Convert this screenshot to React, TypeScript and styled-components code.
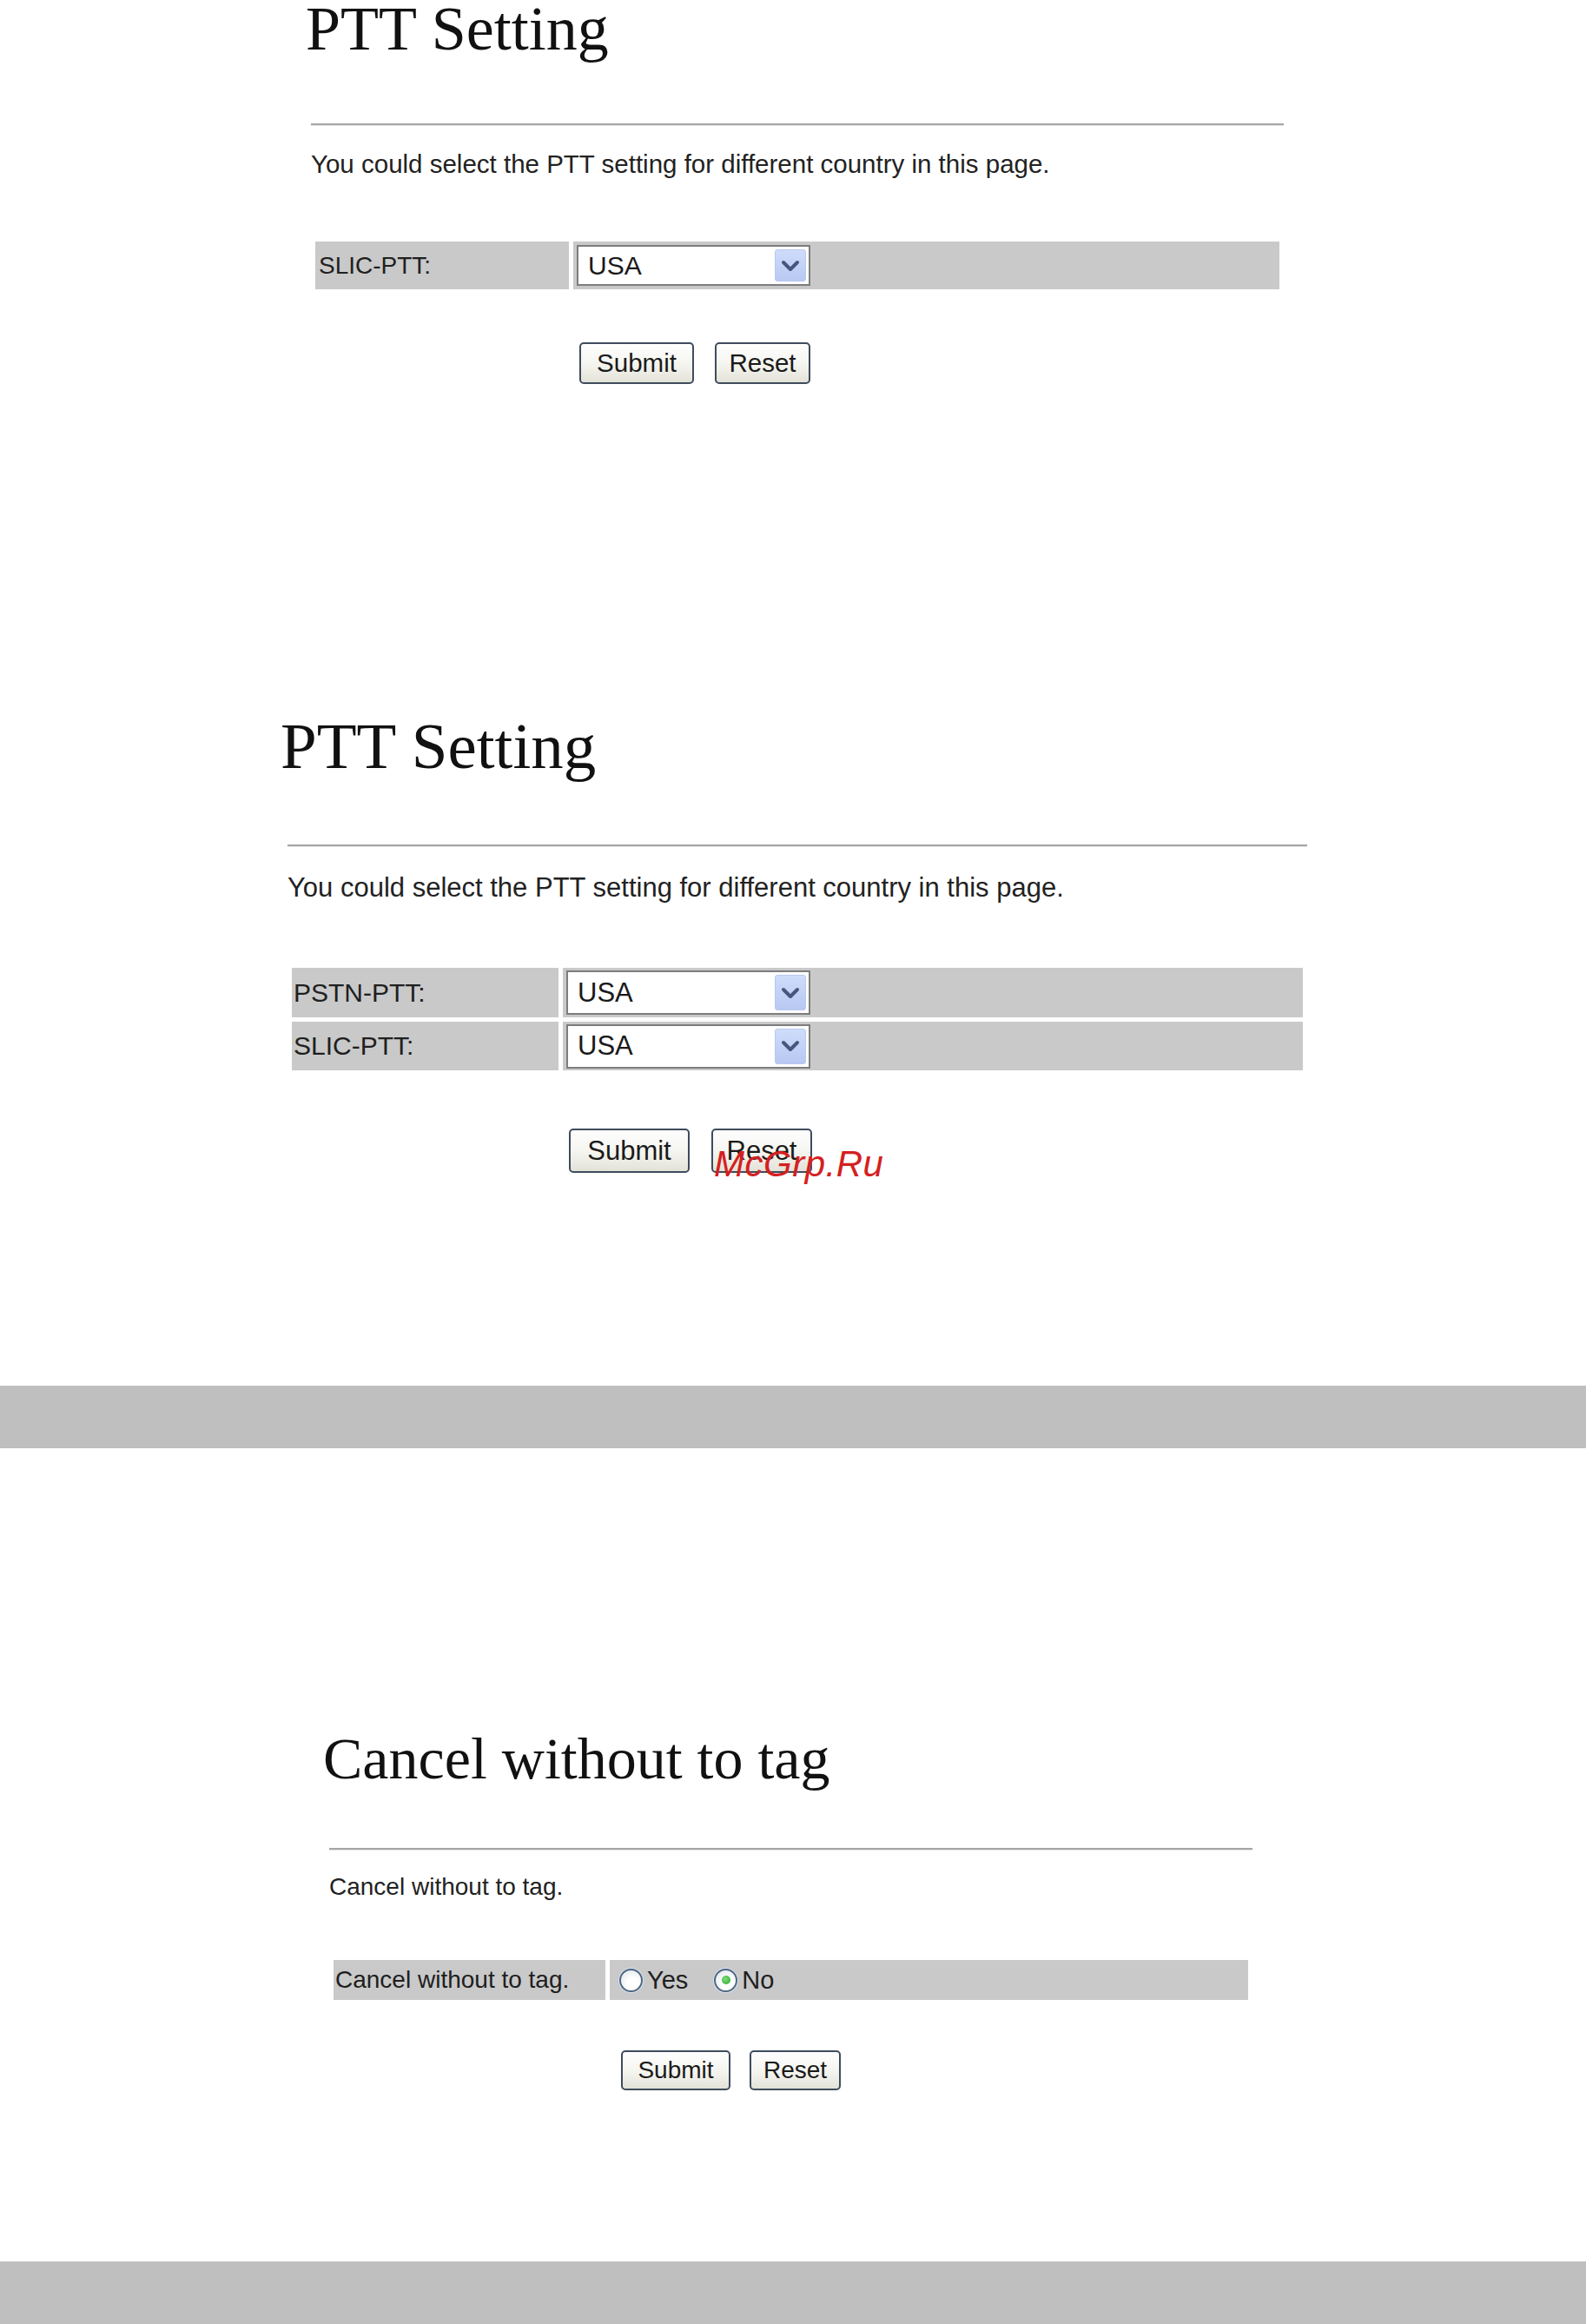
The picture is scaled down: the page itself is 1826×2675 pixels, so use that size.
import React from 'react'
import styled, { createGlobalStyle } from 'styled-components'

const GlobalStyle = createGlobalStyle`
  html, body {
    margin: 0;
    padding: 0;
    background: #ffffff;
  }
  body {
    font-family: 'Liberation Sans', Arial, sans-serif;
    color: #1e1e1e;
  }
`

const Page = styled.div`
  width: 1826px;
  height: 2675px;
  overflow: hidden;
  display: flex;
  flex-direction: column;
  background: #ffffff;
`

const Section = styled.section<{ $top: number }>`
  display: flex;
  flex-direction: column;
  align-items: flex-start;
  margin-top: ${({ $top }) => $top}px;
`

const Title = styled.h1<{ $size: number; $lh: number; $left: number }>`
  margin: 0;
  padding-left: ${({ $left }) => $left}px;
  font-family: 'Liberation Serif', 'Times New Roman', serif;
  font-weight: normal;
  font-size: ${({ $size }) => $size}px;
  line-height: ${({ $lh }) => $lh}px;
  color: #111111;
  white-space: nowrap;
`

const Rule = styled.hr<{ $left: number; $width: number; $top: number }>`
  box-sizing: border-box;
  margin: ${({ $top }) => $top}px 0 0 ${({ $left }) => $left}px;
  width: ${({ $width }) => $width}px;
  height: 3px;
  border: 0;
  border-top: 2px solid #a6a6a6;
  border-bottom: 1px solid #e4e4e4;
`

const Desc = styled.p<{ $left: number; $top: number; $fs: number; $lh: number }>`
  margin: ${({ $top }) => $top}px 0 0 ${({ $left }) => $left}px;
  font-size: ${({ $fs }) => $fs}px;
  line-height: ${({ $lh }) => $lh}px;
  color: #222222;
  white-space: nowrap;
`

const Table = styled.div<{ $left: number; $top: number; $width: number }>`
  display: flex;
  flex-direction: column;
  gap: 5px;
  margin: ${({ $top }) => $top}px 0 0 ${({ $left }) => $left}px;
  width: ${({ $width }) => $width}px;
`

const Row = styled.div<{ $h: number; $labelW: number }>`
  display: grid;
  grid-template-columns: ${({ $labelW }) => $labelW}px 1fr;
  column-gap: 5px;
  height: ${({ $h }) => $h}px;
`

const LabelCell = styled.div<{ $fs: number; $pad: number }>`
  display: flex;
  align-items: center;
  padding-left: ${({ $pad }) => $pad}px;
  background: #c9c9c9;
  font-size: ${({ $fs }) => $fs}px;
  color: #202020;
  white-space: nowrap;
`

const ValueCell = styled.div<{ $pad: number }>`
  display: flex;
  align-items: center;
  padding-left: ${({ $pad }) => $pad}px;
  background: #c9c9c9;
`

const SelectBox = styled.div<{ $w: number; $h: number; $fs: number }>`
  box-sizing: border-box;
  display: flex;
  align-items: stretch;
  justify-content: space-between;
  width: ${({ $w }) => $w}px;
  height: ${({ $h }) => $h}px;
  padding: 3px;
  border: 2px solid #7d7d7d;
  background: #ffffff;
  font-size: ${({ $fs }) => $fs}px;
  color: #1a1a1a;
`

const SelectValue = styled.span`
  display: flex;
  align-items: center;
  padding-left: 8px;
`

const ArrowBox = styled.span`
  display: flex;
  align-items: center;
  justify-content: center;
  width: 34px;
  border-radius: 3px;
  background: linear-gradient(#cfdcfb, #b7c8f2);
  border: 1px solid #b9c8ee;
`

const RadioGroup = styled.div<{ $fs: number }>`
  display: flex;
  align-items: center;
  font-size: ${({ $fs }) => $fs}px;
  color: #202020;
`

const RadioItem = styled.label<{ $gapAfter: number }>`
  display: flex;
  align-items: center;
  gap: 5px;
  margin-right: ${({ $gapAfter }) => $gapAfter}px;
`

const RadioDot = styled.span<{ $checked?: boolean }>`
  box-sizing: border-box;
  display: flex;
  align-items: center;
  justify-content: center;
  width: 27px;
  height: 27px;
  border-radius: 50%;
  border: 2px solid #4f6781;
  background: radial-gradient(circle at 60% 65%, #ffffff 30%, #dfe3e8 100%);
  box-shadow: 0 0 0 1px #d4e2f2;

  &::after {
    content: '';
    display: ${({ $checked }) => ($checked ? 'block' : 'none')};
    width: 10px;
    height: 10px;
    border-radius: 50%;
    background: radial-gradient(circle at 40% 40%, #7ee07e, #23a323);
  }
`

const ButtonBar = styled.div<{ $left: number; $top: number; $gap: number }>`
  position: relative;
  display: flex;
  gap: ${({ $gap }) => $gap}px;
  margin: ${({ $top }) => $top}px 0 0 ${({ $left }) => $left}px;
`

const Button = styled.button<{ $w: number; $h: number; $fs: number }>`
  box-sizing: border-box;
  width: ${({ $w }) => $w}px;
  height: ${({ $h }) => $h}px;
  padding: 0;
  border: 2px solid #3e4c5c;
  border-radius: 5px;
  background: linear-gradient(#fefefe 0%, #f4f4ef 55%, #e3e2d8 100%);
  font-family: 'Liberation Sans', Arial, sans-serif;
  font-size: ${({ $fs }) => $fs}px;
  color: #1a1a1a;
  cursor: pointer;
`

const Watermark = styled.span`
  position: absolute;
  left: 167px;
  top: 21px;
  font-family: 'Liberation Sans', Arial, sans-serif;
  font-style: italic;
  font-size: 42px;
  line-height: 40px;
  letter-spacing: 0.5px;
  color: #d42020;
  pointer-events: none;
  white-space: nowrap;
`

const Band = styled.div<{ $top: number; $h: number }>`
  flex: none;
  margin-top: ${({ $top }) => $top}px;
  height: ${({ $h }) => $h}px;
  background: #bfbfbf;
`

const Chevron = () => (
  <svg width="22" height="14" viewBox="0 0 22 14">
    <path d="M3 3 L11 11 L19 3" fill="none" stroke="#46577d" strokeWidth="4" strokeLinecap="round" strokeLinejoin="round" />
  </svg>
)

type Spec = {
  top: number
  title: string
  titleSize: number
  titleLh: number
  titleLeft: number
  ruleLeft: number
  ruleWidth: number
  ruleTop: number
  desc: string
  descLeft: number
  descTop: number
  descFs: number
  descLh: number
  tableLeft: number
  tableTop: number
  tableWidth: number
  labelW: number
  labelPad: number
  labelFs: number
  valuePad: number
  rows: { label: string; h: number }[]
  selectW?: number
  selectH?: number
  selectFs?: number
  btnLeft: number
  btnTop: number
  btnGap: number
  btnH: number
  btnFs: number
  submitW: number
  resetW: number
  radio?: boolean
  watermark?: boolean
}

const specs: Spec[] = [
  {
    top: 0,
    title: 'PTT Setting',
    titleSize: 72,
    titleLh: 66,
    titleLeft: 352,
    ruleLeft: 358,
    ruleWidth: 1120,
    ruleTop: 76,
    desc: 'You could select the PTT setting for different country in this page.',
    descLeft: 358,
    descTop: 27,
    descFs: 29.5,
    descLh: 34,
    tableLeft: 363,
    tableTop: 72,
    tableWidth: 1110,
    labelW: 292,
    labelPad: 4,
    labelFs: 28,
    valuePad: 4,
    rows: [{ label: 'SLIC-PTT:', h: 55 }],
    selectW: 269,
    selectH: 47,
    selectFs: 30,
    btnLeft: 667,
    btnTop: 61,
    btnGap: 24,
    btnH: 48,
    btnFs: 29.5,
    submitW: 132,
    resetW: 110,
  },
  {
    top: 382,
    title: 'PTT Setting',
    titleSize: 75,
    titleLh: 69,
    titleLeft: 323,
    ruleLeft: 331,
    ruleWidth: 1174,
    ruleTop: 79,
    desc: 'You could select the PTT setting for different country in this page.',
    descLeft: 331,
    descTop: 29,
    descFs: 31,
    descLh: 36,
    tableLeft: 336,
    tableTop: 74,
    tableWidth: 1164,
    labelW: 307,
    labelPad: 2,
    labelFs: 30,
    valuePad: 4,
    rows: [
      { label: 'PSTN-PTT:', h: 57 },
      { label: 'SLIC-PTT:', h: 56 },
    ],
    selectW: 281,
    selectH: 51,
    selectFs: 31,
    btnLeft: 655,
    btnTop: 67,
    btnGap: 25,
    btnH: 51,
    btnFs: 31,
    submitW: 139,
    resetW: 116,
    watermark: true,
  },
]

const cancelSpec: Spec = {
  top: 325,
  title: 'Cancel without to tag',
  titleSize: 68,
  titleLh: 64,
  titleLeft: 372,
  ruleLeft: 379,
  ruleWidth: 1063,
  ruleTop: 71,
  desc: 'Cancel without to tag.',
  descLeft: 379,
  descTop: 26,
  descFs: 28,
  descLh: 32,
  tableLeft: 384,
  tableTop: 68,
  tableWidth: 1053,
  labelW: 313,
  labelPad: 2,
  labelFs: 28,
  valuePad: 11,
  rows: [{ label: 'Cancel without to tag.', h: 46 }],
  btnLeft: 715,
  btnTop: 58,
  btnGap: 22,
  btnH: 46,
  btnFs: 28,
  submitW: 126,
  resetW: 105,
  radio: true,
}

const Panel = ({ spec }: { spec: Spec }) => (
  <Section $top={spec.top}>
    <Title $size={spec.titleSize} $lh={spec.titleLh} $left={spec.titleLeft}>
      {spec.title}
    </Title>
    <Rule $left={spec.ruleLeft} $width={spec.ruleWidth} $top={spec.ruleTop} />
    <Desc $left={spec.descLeft} $top={spec.descTop} $fs={spec.descFs} $lh={spec.descLh}>
      {spec.desc}
    </Desc>
    <Table $left={spec.tableLeft} $top={spec.tableTop} $width={spec.tableWidth}>
      {spec.rows.map((row) => (
        <Row key={row.label} $h={row.h} $labelW={spec.labelW}>
          <LabelCell $fs={spec.labelFs} $pad={spec.labelPad}>
            {row.label}
          </LabelCell>
          <ValueCell $pad={spec.valuePad}>
            {spec.radio ? (
              <RadioGroup $fs={spec.labelFs + 1}>
                <RadioItem $gapAfter={30}>
                  <RadioDot />
                  Yes
                </RadioItem>
                <RadioItem $gapAfter={0}>
                  <RadioDot $checked />
                  No
                </RadioItem>
              </RadioGroup>
            ) : (
              <SelectBox $w={spec.selectW!} $h={spec.selectH!} $fs={spec.selectFs!}>
                <SelectValue>USA</SelectValue>
                <ArrowBox>
                  <Chevron />
                </ArrowBox>
              </SelectBox>
            )}
          </ValueCell>
        </Row>
      ))}
    </Table>
    <ButtonBar $left={spec.btnLeft} $top={spec.btnTop} $gap={spec.btnGap}>
      <Button $w={spec.submitW} $h={spec.btnH} $fs={spec.btnFs}>
        Submit
      </Button>
      <Button $w={spec.resetW} $h={spec.btnH} $fs={spec.btnFs}>
        Reset
      </Button>
      {spec.watermark && <Watermark>McGrp.Ru</Watermark>}
    </ButtonBar>
  </Section>
)

export default function App() {
  return (
    <>
      <GlobalStyle />
      <Page>
        {specs.map((spec, i) => (
          <Panel key={i} spec={spec} />
        ))}
        <Band $top={245} $h={72} />
        <Panel spec={cancelSpec} />
        <Band $top={197} $h={72} />
      </Page>
    </>
  )
}
